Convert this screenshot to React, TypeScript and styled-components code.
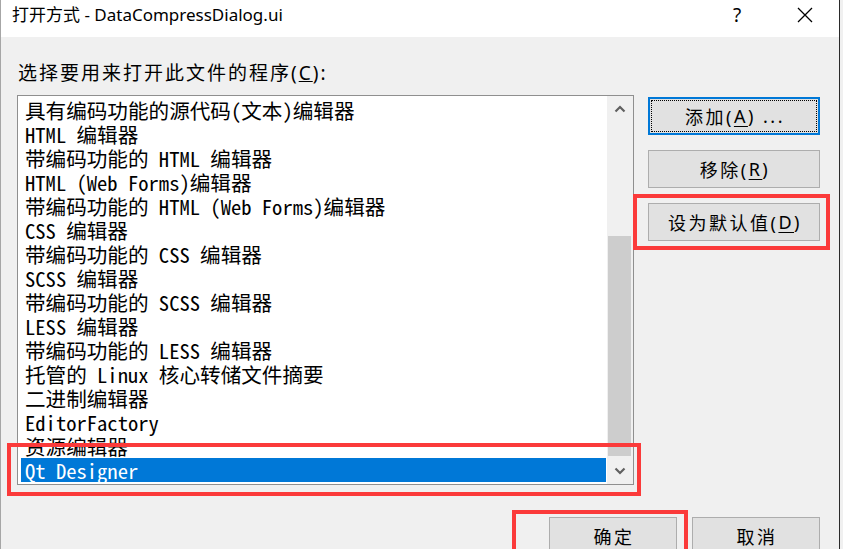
import React from 'react';
import styled, { createGlobalStyle } from 'styled-components';

const GlobalStyle = createGlobalStyle`
  html, body { margin: 0; padding: 0; background: #f0f0f0; }
  body { width: 843px; height: 549px; overflow: hidden; }
  * { box-sizing: border-box; }
`;

const UI = `"Noto Sans", "Noto Sans CJK SC", sans-serif`;
const MONO = `"Noto Sans Mono CJK SC", "Liberation Mono", "Noto Sans CJK SC", monospace`;

const Window = styled.div`
  position: relative;
  width: 840px;
  height: 549px;
  border-left: 1px solid #a6a6a6;
  border-right: 1px solid #2a2a2a;
  display: flex;
  flex-direction: column;
  overflow: hidden;
  font-family: ${UI};
  color: #000;
`;

const TitleBar = styled.div`
  height: 37px;
  flex: none;
  background: #fff;
  display: flex;
  align-items: flex-start;
  padding: 3px 0 0 11px;
`;

const Title = styled.div`
  flex: 1;
  font-size: 17px;
  line-height: 24px;
`;

const TitleButton = styled.div`
  width: 68px;
  height: 24px;
  display: flex;
  align-items: center;
  justify-content: center;
  font-size: 19px;
`;

const Body = styled.div`
  flex: 1;
  background: #f0f0f0;
  display: flex;
  flex-direction: column;
  padding: 24px 19px 0 16px;
`;

const Label = styled.div`
  font-size: 19px;
  line-height: 24px;
  padding-left: 1px;
  margin-bottom: 10px;
  letter-spacing: 2px;
`;

const MainRow = styled.div`
  display: flex;
  align-items: flex-start;
  gap: 14px;
`;

const ListBox = styled.div`
  width: 617px;
  height: 390px;
  background: #fff;
  border: 1px solid #8f8f8f;
  display: flex;
`;

const Items = styled.div`
  flex: 1;
  padding: 2px 1px 0 3px;
  overflow: hidden;
`;

const Row = styled.div<{ $selected?: boolean }>`
  height: 24px;
  line-height: 24px;
  padding-left: 4px;
  display: flex;
  align-items: center;
  font-family: ${MONO};
  font-size: 20.6px;
  white-space: pre;
  background: ${(p) => (p.$selected ? '#0078d7' : 'transparent')};
  color: ${(p) => (p.$selected ? '#fff' : '#000')};
`;

const ScrollBar = styled.div`
  width: 26px;
  background: #f0f0f0;
  display: flex;
  flex-direction: column;
`;

const ArrowBox = styled.div`
  height: 26px;
  flex: none;
  display: flex;
  align-items: center;
  justify-content: center;
`;

const Track = styled.div`
  flex: 1;
  display: flex;
  flex-direction: column;
  justify-content: flex-end;
  padding: 0 2px 2px 1px;
`;

const Thumb = styled.div`
  height: 220px;
  background: #cdcdcd;
`;

const ButtonColumn = styled.div`
  display: flex;
  flex-direction: column;
  gap: 15px;
  padding-top: 2px;
`;

const Button = styled.div<{ $focused?: boolean; $w?: number }>`
  position: relative;
  width: ${(p) => p.$w ?? 172}px;
  height: 38px;
  background: #e1e1e1;
  border: ${(p) => (p.$focused ? '2px solid #0078d7' : '1px solid #adadad')};
  display: flex;
  align-items: center;
  justify-content: center;
  font-size: 18px;
  letter-spacing: 2.5px;
  padding-left: 2px;
  u { text-underline-offset: 3px; }
  ${(p) =>
    p.$focused
      ? `&::after { content: ''; position: absolute; inset: 1px; border: 1px dotted #000; }`
      : ''}
`;

const Footer = styled.div`
  display: flex;
  justify-content: flex-end;
  gap: 15px;
  margin-top: 32px;
`;

const Annotation = styled.div<{ $l: number; $t: number; $w: number; $h: number }>`
  position: absolute;
  left: ${(p) => p.$l}px;
  top: ${(p) => p.$t}px;
  width: ${(p) => p.$w}px;
  height: ${(p) => p.$h}px;
  border: 4px solid #fb3a3a;
  pointer-events: none;
`;

const Chevron = ({ up }: { up?: boolean }) => (
  <svg width="12" height="8" viewBox="0 0 12 8">
    <path
      d={up ? 'M1.5 6.5 L6 2 L10.5 6.5' : 'M1.5 1.5 L6 6 L10.5 1.5'}
      fill="none"
      stroke="#606060"
      strokeWidth="2.2"
    />
  </svg>
);

const items = [
  '具有编码功能的源代码(文本)编辑器',
  'HTML 编辑器',
  '带编码功能的 HTML 编辑器',
  'HTML (Web Forms)编辑器',
  '带编码功能的 HTML (Web Forms)编辑器',
  'CSS 编辑器',
  '带编码功能的 CSS 编辑器',
  'SCSS 编辑器',
  '带编码功能的 SCSS 编辑器',
  'LESS 编辑器',
  '带编码功能的 LESS 编辑器',
  '托管的 Linux 核心转储文件摘要',
  '二进制编辑器',
  'EditorFactory',
  '资源编辑器',
  'Qt Designer',
];

export default function App() {
  return (
    <>
      <GlobalStyle />
      <Window>
        <TitleBar>
          <Title>打开方式 - DataCompressDialog.ui</Title>
          <TitleButton>?</TitleButton>
          <TitleButton>
            <svg width="16" height="16" viewBox="0 0 16 16">
              <path d="M1 1 L15 15 M15 1 L1 15" stroke="#000" strokeWidth="1.3" />
            </svg>
          </TitleButton>
        </TitleBar>
        <Body>
          <Label>
            选择要用来打开此文件的程序(<u>C</u>):
          </Label>
          <MainRow>
            <ListBox>
              <Items>
                {items.map((t, i) => (
                  <Row key={i} $selected={i === items.length - 1}>
                    {t}
                  </Row>
                ))}
              </Items>
              <ScrollBar>
                <ArrowBox>
                  <Chevron up />
                </ArrowBox>
                <Track>
                  <Thumb />
                </Track>
                <ArrowBox>
                  <Chevron />
                </ArrowBox>
              </ScrollBar>
            </ListBox>
            <ButtonColumn>
              <Button $focused>
                添加(<u>A</u>) ...
              </Button>
              <Button>
                移除(<u>R</u>)
              </Button>
              <Button>
                设为默认值(<u>D</u>)
              </Button>
            </ButtonColumn>
          </MainRow>
          <Footer>
            <Button $w={128}>确定</Button>
            <Button $w={128}>取消</Button>
          </Footer>
        </Body>
        <Annotation $l={6} $t={443} $w={634} $h={53} />
        <Annotation $l={632} $t={194} $w={197} $h={56} />
        <Annotation $l={511} $t={510} $w={176} $h={60} />
      </Window>
    </>
  );
}
